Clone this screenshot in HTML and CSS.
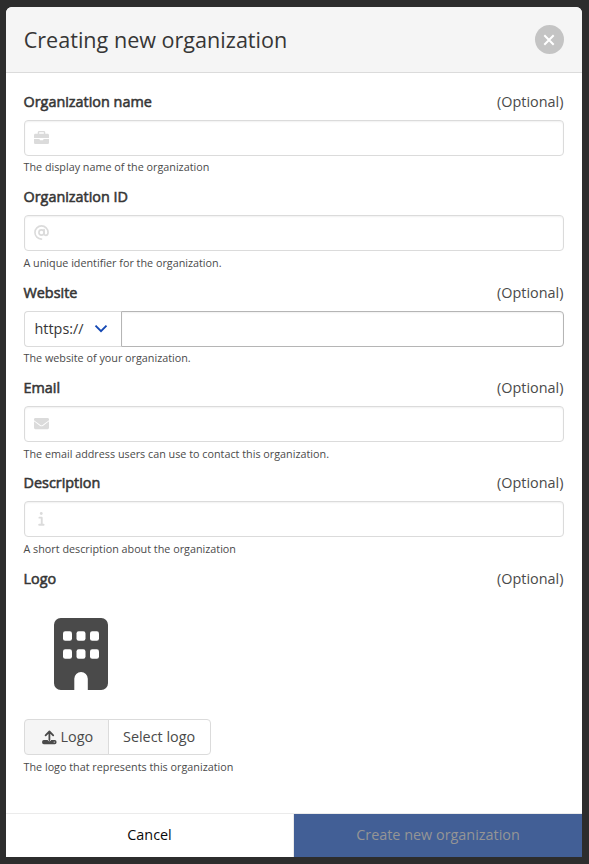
FILE: index.html
```html
<!DOCTYPE html>
<html lang="en">
<head>
<meta charset="utf-8">
<title>Creating new organization</title>
<link rel="stylesheet" href="styles.css">
</head>
<body>
<main class="modal-card">
  <header class="modal-head">
    <h1 class="title">Creating new organization</h1>
    <button class="close" aria-label="Close"><svg viewBox="0 0 29 29"><path d="M9.300 10.300l9.400 9.400M18.700 10.300l-9.400 9.400"/></svg></button>
  </header>
  <form class="modal-body">
    <div class="field">
      <div class="label-row"><label class="label">Organization name</label><span>(Optional)</span></div>
      <div class="input"><svg class="icon" viewBox="0 0 512 512"><path d="M320 336c0 8.84-7.16 16-16 16h-96c-8.84 0-16-7.16-16-16v-30H0v126c0 25.6 22.4 48 48 48h416c25.6 0 48-22.4 48-48V306H320v30zm144-208h-80V80c0-25.6-22.4-48-48-48H176c-25.6 0-48 22.4-48 48v48H48c-25.6 0-48 22.4-48 48v94h512v-94c0-25.6-22.4-48-48-48zm-128 0H176V80h160v48z" fill-rule="evenodd"/></svg></div>
      <p class="help">The display name of the organization</p>
    </div>
    <div class="field">
      <div class="label-row"><label class="label">Organization ID</label></div>
      <div class="input"><svg class="icon line" viewBox="0 0 512 512"><circle cx="256" cy="256" r="88"/><path d="M344 160v136c0 38 28 56 57 56 44 0 79-32 79-96C480 130 380 32 256 32S32 132 32 256s100 224 224 224"/></svg></div>
      <p class="help">A unique identifier for the organization.</p>
    </div>
    <div class="field">
      <div class="label-row"><label class="label">Website</label><span>(Optional)</span></div>
      <div class="addons">
        <div class="select">https://<svg class="chevron" viewBox="0 0 14 10"><path d="M1.5 1.7L7 7.2l5.5-5.5"/></svg></div>
        <div class="input hovered"></div>
      </div>
      <p class="help">The website of your organization.</p>
    </div>
    <div class="field">
      <div class="label-row"><label class="label">Email</label><span>(Optional)</span></div>
      <div class="input"><svg class="icon" viewBox="0 0 512 512"><path d="M502.3 190.8c3.9-3.1 9.7-.2 9.7 4.7V400c0 26.5-21.5 48-48 48H48c-26.5 0-48-21.5-48-48V195.6c0-5 5.7-7.8 9.7-4.7 22.4 17.4 52.1 39.5 154.1 113.6 21.1 15.4 56.7 47.8 92.2 47.6 35.7.3 72-32.8 92.3-47.6 102-74.1 131.6-96.3 154-113.7zM256 320c23.2.4 56.6-29.2 73.4-41.4 132.7-96.3 142.8-104.7 173.4-128.7 5.8-4.5 9.2-11.5 9.2-18.9v-19c0-26.5-21.5-48-48-48H48c-26.5 0-48 21.5-48 48v19c0 7.4 3.4 14.3 9.2 18.9 30.6 23.9 40.7 32.4 173.4 128.7 16.8 12.2 50.2 41.8 73.4 41.4z"/></svg></div>
      <p class="help">The email address users can use to contact this organization.</p>
    </div>
    <div class="field">
      <div class="label-row"><label class="label">Description</label><span>(Optional)</span></div>
      <div class="input"><svg class="icon" viewBox="0 0 512 512"><g transform="translate(0 20)"><circle cx="248" cy="66" r="48"/><path d="M184 176h80q32 0 32 32v208h32q32 0 32 32t-32 32H176q-32 0-32-32t32-32h56V240h-48q-32 0-32-32t32-32z"/></g></svg></div>
      <p class="help">A short description about the organization</p>
    </div>
    <div class="field">
      <div class="label-row"><label class="label">Logo</label><span>(Optional)</span></div>
      <svg class="building" viewBox="0 0 54 72"><path fill-rule="evenodd" d="M6.75 0h40.5A6.75 6.75 0 0 1 54 6.75v58.5A6.75 6.75 0 0 1 47.25 72H33.8V60.75a6.75 6.75 0 0 0-13.5 0V72H6.75A6.75 6.75 0 0 1 0 65.25V6.75A6.75 6.75 0 0 1 6.75 0z"/><g class="windows"><rect x="9" y="13.3" width="9" height="9.4" rx="2.2"/><rect x="22.5" y="13.3" width="9" height="9.4" rx="2.2"/><rect x="36" y="13.3" width="9" height="9.4" rx="2.2"/><rect x="9" y="31.3" width="9" height="9.4" rx="2.2"/><rect x="22.5" y="31.3" width="9" height="9.4" rx="2.2"/><rect x="36" y="31.3" width="9" height="9.4" rx="2.2"/></g></svg>
      <div class="file">
        <span class="file-cta"><svg class="upload" viewBox="0 0 15 15"><path class="arrow" d="M7.4 10V1.8M3.6 5.4l3.8-3.9 3.8 3.9"/><path fill-rule="evenodd" d="M1.8 10h3.8a1.9 1.9 0 0 0 3.6 0h3.600a1.700 1.700 0 0 1 1.700 1.700v.8a1.700 1.700 0 0 1-1.700 1.700h-11A1.700 1.700 0 0 1 .1 12.500v-.8A1.700 1.700 0 0 1 1.800 10zM12.200 11.500a.6.6 0 1 0 0 1.200.6.6 0 0 0 0-1.200z"/></svg>Logo</span>
        <span class="file-name">Select logo</span>
      </div>
      <p class="help">The logo that represents this organization</p>
    </div>
  </form>
  <footer class="modal-foot">
    <button class="cancel">Cancel</button>
    <button class="create" disabled>Create new organization</button>
  </footer>
</main>
</body>
</html>
```
FILE: styles.css
```css
* { box-sizing: border-box; }
html { font-size: 14.4px; }
body {
  margin: 0;
  height: 864px;
  overflow: hidden;
  padding: 7px 7px 7px 6px;
  background: #2d2d2d;
  color: #4a4a4a;
  font: 1rem/1.5 "Open Sans", sans-serif;
}
svg { display: block; flex: none; }
button { font: inherit; border: 0; padding: 0; }
.modal-card {
  display: flex;
  flex-direction: column;
  width: 576px;
  height: 850px;
  background: #fff;
  border-radius: 6px 6px 0 0;
  overflow: hidden;
}
.modal-head {
  display: flex;
  align-items: center;
  justify-content: space-between;
  height: 66.2px;
  flex: none;
  padding: 0 18px 0 17.7px;
  background: #f5f5f5;
  border-bottom: 1px solid #dbdbdb;
}
.title { margin: 0; font-size: 1.5rem; line-height: 1; font-weight: 400; color: #363636; }
.close { width: 29px; height: 29px; border-radius: 50%; background: #c4c4c4; }
.close path { fill: none; stroke: #fff; stroke-width: 2; }
.modal-body { flex: 1; padding: 17.65px 18px 0; }
.field { display: flow-root; margin-bottom: calc(.75rem - .35px); }
.label-row {
  display: flex;
  justify-content: space-between;
  height: 1.5rem;
  margin: 0 .6px calc(.5rem + .35px) -.5px;
}
.label { color: #363636; -webkit-text-stroke: .55px #363636; }
.input {
  display: flex;
  align-items: center;
  height: 2.5rem;
  padding-left: 9px;
  border: 1px solid #dbdbdb;
  border-radius: 4px;
  background: #fff;
  box-shadow: inset 0 1px 2px rgba(10, 10, 10, .06);
}
.icon { width: 15px; height: 15px; margin-bottom: 1px; fill: #dbdbdb; }
.line { fill: none; stroke: #dbdbdb; stroke-width: 56; stroke-linecap: round; }
.help { margin: .25rem 0 0 -.5px; font-size: .75rem; line-height: 1.5; }
.field:first-child .help { margin-top: calc(.25rem - .15px); margin-bottom: .15px; }
.addons { display: flex; }
.select {
  display: flex;
  align-items: center;
  width: 97px;
  height: 2.5rem;
  padding-left: 9.5px;
  border: 1px solid #dbdbdb;
  border-right: 0;
  border-radius: 4px 0 0 4px;
  color: #363636;
}
.chevron { width: 14px; height: 10px; margin: 1px 0 0 10px; fill: none; stroke: #1448b4; stroke-width: 1.9; }
.hovered { flex: 1; border-color: #b5b5b5; border-radius: 0 4px 4px 0; }
.building { width: 54px; height: 72px; margin: 28.8px 0 29.2px 30px; fill: #4a4a4a; }
.windows { fill: #fff; }
.file { display: flex; height: 2.5rem; }
.file-cta, .file-name { display: flex; align-items: center; border: 1px solid #dbdbdb; }
.file-cta { width: 85px; padding-left: 17px; gap: 3.5px; background: #f5f5f5; border-radius: 4px 0 0 4px; }
.file-name { width: 103px; margin-left: -1px; padding-left: 14px; border-radius: 0 4px 4px 0; }
.file + .help { margin-top: 4.2px; }
.upload { width: 15px; height: 15px; fill: #4a4a4a; }
.arrow { fill: none; stroke: #4a4a4a; stroke-width: 1.8; stroke-linecap: round; stroke-linejoin: round; }
.modal-foot { display: flex; flex: none; height: 44px; border-top: 1px solid #ebebeb; }
.modal-foot button { padding-bottom: 2px; }
.cancel { width: 288px; border-right: 1px solid #ebebeb; background: #fff; color: #0a0a0a; }
.create { flex: 1; background: #425f96; color: #959595; }
```
